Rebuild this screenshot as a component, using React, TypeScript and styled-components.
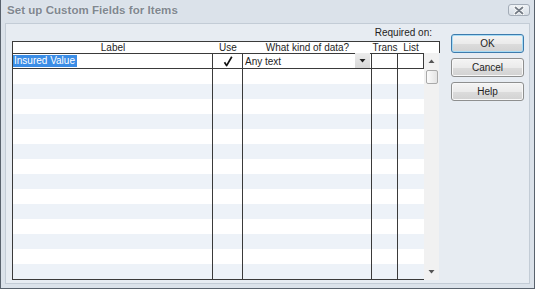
import React from "react";
import styled, { createGlobalStyle } from "styled-components";

const Global = createGlobalStyle`
  html, body { margin: 0; padding: 0; background: #dde4ec; }
  body { font-family: "Liberation Sans", Arial, sans-serif; }
  * { box-sizing: border-box; }
`;

const Window = styled.div`
  width: 535px;
  height: 289px;
  background: #dbe2ea;
  border-left: 1px solid #59626d;
  border-right: 1px solid #59626d;
  border-bottom: 1px solid #59626d;
  display: flex;
  flex-direction: column;
  padding: 0 4px 4px 4px;
`;

const TitleBar = styled.div`
  height: 23px;
  display: flex;
  align-items: flex-start;
  justify-content: space-between;
  padding: 4px 0 0 2px;
`;

const Title = styled.div`
  font-family: "Liberation Sans", Arial, sans-serif;
  font-weight: bold;
  font-size: 11.5px;
  line-height: 13px;
  color: #80878f;
  letter-spacing: 0.05px;
  text-shadow: 0 0 2px #eef2f6;
`;

const CloseBox = styled.div`
  width: 22px;
  height: 12px;
  border: 1px solid #a3acb7;
  border-radius: 3px;
  background: linear-gradient(#eef2f6, #d7dee6);
  display: flex;
  align-items: center;
  justify-content: center;
  margin-right: 0px;
`;

const Client = styled.div`
  flex: 1;
  background: #e7ecf2;
  border: 1px solid #c3ccd6;
  display: flex;
  flex-direction: row;
  align-items: flex-start;
  padding-left: 6px;
`;

const LeftCol = styled.div`
  width: 428px;
  display: flex;
  flex-direction: column;
`;

const RequiredRow = styled.div`
  height: 17px;
  line-height: 17px;
  font-size: 10px;
  color: #1e1e1e;
  text-align: right;
  padding-right: 8px;
`;

const Header = styled.div`
  display: flex;
  background: #ffffff;
  border: 1px solid #3a3a3a;
  border-bottom: none;
  height: 12px;
`;

const HeadCell = styled.div<{ $w: number }>`
  width: ${(p) => p.$w}px;
  font-size: 10px;
  line-height: 12px;
  color: #1e1e1e;
  text-align: center;
  white-space: nowrap;
`;

const Body = styled.div`
  display: flex;
  flex-direction: row;
  height: 227px;
`;

const Rows = styled.div`
  width: 412px;
  border-left: 1px solid #3a3a3a;
  border-bottom: 1px solid #3a3a3a;
  display: flex;
  flex-direction: column;
  background: #ffffff;
`;

const Row = styled.div<{ $alt?: boolean; $edit?: boolean }>`
  display: flex;
  flex-direction: row;
  height: ${(p) => (p.$edit ? 16 : 15)}px;
  background: ${(p) => (p.$alt ? "#edf2f8" : "#ffffff")};
  border-top: ${(p) => (p.$edit ? "1px solid #3a3a3a" : "none")};
  border-bottom: ${(p) => (p.$edit ? "1px solid #3a3a3a" : "none")};
  box-sizing: content-box;
`;

const Cell = styled.div<{ $w: number; $line?: boolean }>`
  width: ${(p) => p.$w}px;
  border-right: ${(p) => (p.$line ? "1px solid #3a3a3a" : "none")};
  display: flex;
  align-items: center;
  font-size: 10px;
  color: #1e1e1e;
  white-space: nowrap;
  overflow: visible;
`;

const UseCell = styled(Cell)`
  justify-content: center;
  padding-left: 1px;
`;

const Selected = styled.span`
  background: #3b8de6;
  color: #ffffff;
  line-height: 12px;
  padding: 0 2px 0 1px;
  margin-left: 0px;
`;

const TypeText = styled.span`
  flex: 1;
  padding-left: 2px;
`;

const DropBtn = styled.div`
  width: 15px;
  height: 15px;
  margin-top: -1px;
  margin-right: 1px;
  background: linear-gradient(#ececec, #d8d8d8);
  display: flex;
  align-items: center;
  justify-content: center;
  align-self: flex-start;
`;

const ScrollBar = styled.div`
  width: 15px;
  background: #f1f1f1;
  display: flex;
  flex-direction: column;
  align-items: center;
`;

const ArrowBox = styled.div`
  width: 15px;
  height: 16px;
  display: flex;
  align-items: center;
  justify-content: center;
`;

const Thumb = styled.div`
  width: 12px;
  height: 14px;
  margin-top: 1px;
  border: 1px solid #a9a9a9;
  border-radius: 2px;
  background: linear-gradient(90deg, #fbfbfb, #e4e4e4);
`;

const Spacer = styled.div`
  flex: 1;
`;

const ButtonCol = styled.div`
  display: flex;
  flex-direction: column;
  gap: 5px;
  margin-left: 11px;
  margin-top: 10px;
`;

const Button = styled.div<{ $default?: boolean }>`
  width: 73px;
  height: 19px;
  border: 1px solid ${(p) => (p.$default ? "#3d7bad" : "#8e8f8f")};
  border-radius: 3px;
  background: linear-gradient(#f4f4f4 0%, #ebebeb 50%, #dcdcdc 51%, #d2d2d2 100%);
  box-shadow: inset 0 0 0 1px ${(p) => (p.$default ? "#a8dcf5" : "#f8f8f8")};
  font-size: 10px;
  color: #1e1e1e;
  display: flex;
  align-items: center;
  justify-content: center;
`;

const COLS = [200, 30, 129, 26, 26];

const Check = () => (
  <svg width="10" height="11" viewBox="0 0 10 11">
    <path d="M1.5 6.2 L3.6 9.6 L8.8 0.8" fill="none" stroke="#111" strokeWidth="1.7" strokeLinejoin="round" />
  </svg>
);

const Tri = ({ up, color = "#222" }: { up?: boolean; color?: string }) => (
  <svg width="7" height="4" viewBox="0 0 7 4">
    <path d={up ? "M0.5 4 L3.5 0.5 L6.5 4 Z" : "M0.5 0 L6.5 0 L3.5 3.5 Z"} fill={color} />
  </svg>
);

export default function App() {
  const rows = Array.from({ length: 14 }, (_, i) => i);
  return (
    <>
      <Global />
      <Window>
        <TitleBar>
          <Title>Set up Custom Fields for Items</Title>
          <CloseBox>
            <svg width="12" height="9" viewBox="0 0 12 9">
              <path d="M2.5 1.5 L9.5 7.5 M9.5 1.5 L2.5 7.5" stroke="#ffffff" strokeWidth="3.6" strokeLinecap="round" />
              <path d="M2.5 1.5 L9.5 7.5 M9.5 1.5 L2.5 7.5" stroke="#747c86" strokeWidth="1.8" strokeLinecap="round" />
            </svg>
          </CloseBox>
        </TitleBar>
        <Client>
          <LeftCol>
            <RequiredRow>Required on:</RequiredRow>
            <Header>
              <HeadCell $w={200}>Label</HeadCell>
              <HeadCell $w={30}>Use</HeadCell>
              <HeadCell $w={129}>What kind of data?</HeadCell>
              <HeadCell $w={26}>Trans</HeadCell>
              <HeadCell $w={26}>List</HeadCell>
              <HeadCell $w={15} />
            </Header>
            <Body>
              <Rows>
                <Row $edit style={{ height: 14 }}>
                  <Cell $w={COLS[0]} $line>
                    <Selected>Insured Value</Selected>
                  </Cell>
                  <UseCell $w={COLS[1]} $line>
                    <Check />
                  </UseCell>
                  <Cell $w={COLS[2]} $line>
                    <TypeText>Any text</TypeText>
                    <DropBtn>
                      <Tri />
                    </DropBtn>
                  </Cell>
                  <Cell $w={COLS[3]} $line />
                  <Cell $w={COLS[4]} $line />
                </Row>
                {rows.map((i) => (
                  <Row key={i} $alt={i % 2 === 1}>
                    <Cell $w={COLS[0]} $line />
                    <Cell $w={COLS[1]} $line />
                    <Cell $w={COLS[2]} $line />
                    <Cell $w={COLS[3]} $line />
                    <Cell $w={COLS[4]} />
                  </Row>
                ))}
              </Rows>
              <ScrollBar>
                <ArrowBox>
                  <Tri up color="#555" />
                </ArrowBox>
                <Thumb />
                <Spacer />
                <ArrowBox>
                  <Tri color="#555" />
                </ArrowBox>
              </ScrollBar>
            </Body>
          </LeftCol>
          <ButtonCol>
            <Button $default>OK</Button>
            <Button>Cancel</Button>
            <Button>Help</Button>
          </ButtonCol>
        </Client>
      </Window>
    </>
  );
}
